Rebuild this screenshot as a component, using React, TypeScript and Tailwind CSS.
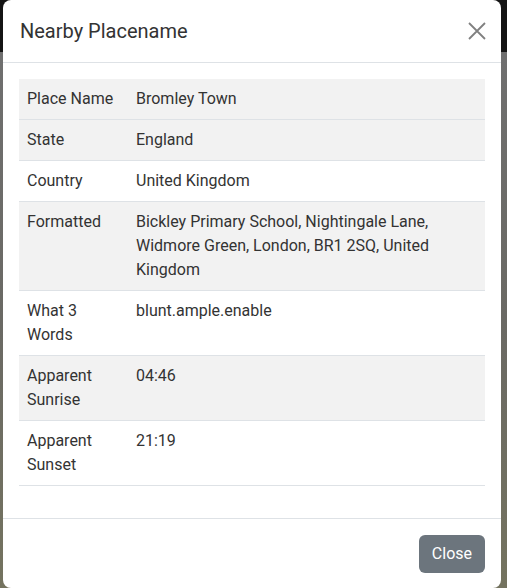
const rows = [
  { label: "Place Name", value: "Bromley Town", shaded: true },
  { label: "State", value: "England", shaded: true },
  { label: "Country", value: "United Kingdom", shaded: false },
  {
    label: "Formatted",
    value: "Bickley Primary School, Nightingale Lane, Widmore Green, London, BR1 2SQ, United Kingdom",
    shaded: true,
  },
  { label: "What 3 Words", value: "blunt.ample.enable", shaded: false },
  { label: "Apparent Sunrise", value: "04:46", shaded: true },
  { label: "Apparent Sunset", value: "21:19", shaded: false },
];

export default function App() {
  return (
    <div className="relative w-[507px] h-[588px] overflow-hidden font-['Roboto',sans-serif] text-[#333333]">
      {/* page behind the dimmed backdrop */}
      <div className="flex flex-col h-full">
        <div className="h-[52px] bg-[#141414]" />
        <div className="flex-1 bg-[linear-gradient(180deg,#6f6f6f_0%,#6a6964_50%,#74735f_100%)]" />
      </div>

      {/* modal */}
      <div className="absolute left-[3px] top-0 w-[498px] h-[588px] bg-white rounded-lg flex flex-col">
        <div className="flex items-center justify-between px-4 h-[63px] border-b border-[#dee2e6]">
          <h5 className="text-[20px] leading-[30px] font-normal pl-[1px]">Nearby Placename</h5>
          <button className="w-[18px] h-[18px] mr-[-1px] flex items-center justify-center">
            <svg width="18" height="18" viewBox="0 0 18 18" fill="none" stroke="#808080" strokeWidth="1.8">
              <path d="M1 1l16 16M17 1L1 17" />
            </svg>
          </button>
        </div>

        <div className="p-4 flex-1">
          <table className="w-full border-collapse text-[16px] leading-6">
            <tbody>
              {rows.map((r) => (
                <tr key={r.label} className={`border-b border-[#dee2e6] ${r.shaded ? "bg-[#f2f2f2]" : "bg-white"}`}>
                  <td className="w-[109px] px-2 py-2 align-top">{r.label}</td>
                  <td className="px-2 py-2 align-top">{r.value}</td>
                </tr>
              ))}
            </tbody>
          </table>
        </div>

        <div className="border-t border-[#dee2e6] h-[70px] flex items-center justify-end px-4">
          <button className="bg-[#6c757d] text-white text-[16px] leading-6 px-[13px] py-[7px] rounded-md">Close</button>
        </div>
      </div>
    </div>
  );
}
